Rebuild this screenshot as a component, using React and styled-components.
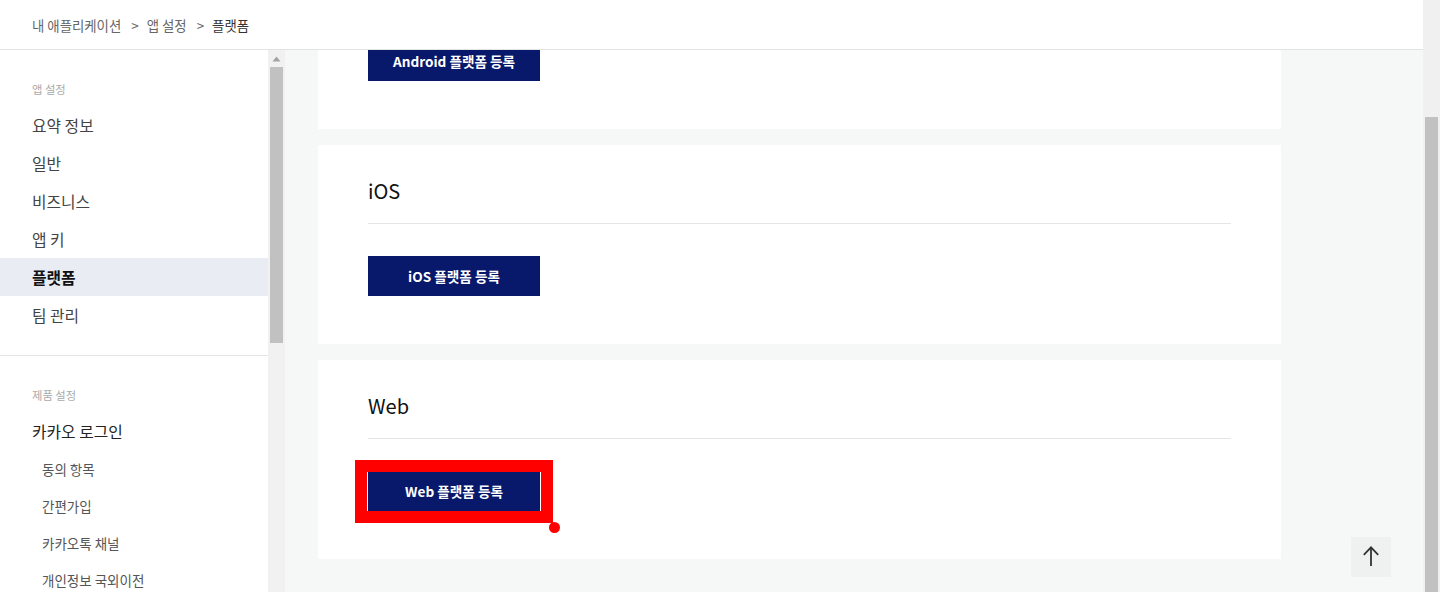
import React, { useLayoutEffect, useRef } from 'react';
import styled, { createGlobalStyle } from 'styled-components';

const GlobalStyle = createGlobalStyle`
  html, body { margin: 0; padding: 0; overflow: hidden; }
  body { font-family: "Noto Sans CJK KR", "Noto Sans", sans-serif; color: #333; }
  * { box-sizing: border-box; }
`;

/* ---------- drawn scrollbars ---------- */
const Track = styled.div`
  flex: 0 0 17px;
  width: 17px;
  display: flex;
  flex-direction: column;
  background: ${p => p.$bg};
`;

const TrackButton = styled.div`
  flex: 0 0 17px;
  display: flex;
  align-items: center;
  justify-content: center;
`;

const Thumb = styled.div`
  margin: 0 2px;
  background: #c1c1c1;
`;

function Scrollbar({ bg, offset, size, withArrow }) {
  return (
    <Track $bg={bg}>
      {withArrow && (
        <TrackButton>
          <svg width="17" height="17" viewBox="0 0 17 17">
            <path d="M4.5 11.5h8l-4-5z" fill="#a3a3a3" />
          </svg>
        </TrackButton>
      )}
      <Thumb style={{ marginTop: offset, height: size }} />
    </Track>
  );
}

/* ---------- page ---------- */
const Frame = styled.div`
  display: flex;
  height: 100vh;
`;

const PageScroller = styled.div`
  flex: 1;
  min-width: 0;
  overflow: hidden;
  background: #f6f7f7;
`;

const Header = styled.header`
  position: sticky;
  top: 0;
  z-index: 2;
  height: 50px;
  background: #fff;
  border-bottom: 1px solid #e3e3e3;
  display: flex;
  align-items: center;
  padding-left: 32px;
`;

const Crumb = styled.span`
  font-size: 13.4px;
  color: ${p => (p.$current ? '#333' : '#666')};
`;

const CrumbSep = styled.span`
  font-size: 13.4px;
  color: #666;
  margin: 0 8px 0 10px;
`;

const BodyRow = styled.div`
  display: flex;
  align-items: flex-start;
`;

const Sidebar = styled.aside`
  position: sticky;
  top: 50px;
  flex: 0 0 285px;
  height: 542px;
  display: flex;
  background: #fff;
`;

const SideList = styled.nav`
  flex: 0 0 268px;
  overflow: hidden;
`;

const Section = styled.div`
  padding: 29px 0 21px;
  border-bottom: ${p => (p.$divider ? '1px solid #e5e5e5' : 'none')};
`;

const SectionLabel = styled.div`
  padding-left: 32px;
  font-size: 11.3px;
  line-height: 20px;
  color: #aaa;
  margin-bottom: 7px;
`;

const MenuItem = styled.div`
  display: flex;
  align-items: center;
  height: ${p => (p.$sub ? '37px' : '38px')};
  padding-left: ${p => (p.$sub ? '42px' : '32px')};
  font-size: ${p => (p.$sub ? '13.5px' : '15.8px')};
  font-weight: ${p => (p.$active ? 700 : 400)};
  color: ${p => (p.$active ? '#111' : p.$strong ? '#222' : p.$sub ? '#555' : '#444')};
  background: ${p => (p.$active ? '#e9ecf3' : 'transparent')};
  white-space: nowrap;
`;

const Main = styled.main`
  flex: 1;
  padding: 30px 0 33px 33px;
  display: flex;
  flex-direction: column;
  gap: 16px;
`;

const Card = styled.section`
  width: 963px;
  background: #fff;
  padding: 30px 50px 48px;
`;

const CardTitle = styled.h2`
  margin: 0;
  font-size: 20px;
  font-weight: 400;
  line-height: 32px;
  color: #111;
  padding-bottom: 16px;
  border-bottom: 1px solid #e5e5e5;
`;

const ButtonWrap = styled.div`
  position: relative;
  width: 172px;
  margin-top: 32px;
`;

const RegisterButton = styled.button`
  display: block;
  width: 172px;
  height: 40px;
  border: none;
  background: #08186a;
  color: #fff;
  font-family: "Noto Sans CJK KR", "Noto Sans", sans-serif;
  font-size: 13.6px;
  font-weight: 700;
  cursor: pointer;
`;

const Highlight = styled.span`
  position: absolute;
  left: -13px;
  top: -11px;
  width: 198px;
  height: 63px;
  border: 12px solid #ff0000;
  pointer-events: none;
`;

const HighlightDot = styled.span`
  position: absolute;
  left: 181px;
  top: 51px;
  width: 11px;
  height: 11px;
  border-radius: 50%;
  background: #ff0000;
`;

const TopButton = styled.button`
  position: fixed;
  right: 49px;
  bottom: 15px;
  width: 40px;
  height: 40px;
  border: none;
  padding: 0;
  background: #eff0f0;
  display: flex;
  align-items: center;
  justify-content: center;
`;

const appSettings = ['요약 정보', '일반', '비즈니스', '앱 키', '플랫폼', '팀 관리'];
const loginSubs = ['동의 항목', '간편가입', '카카오톡 채널', '개인정보 국외이전', '고급', '보안'];
const moreProducts = ['카카오톡 공유', '카카오톡 메시지', '카카오톡 소셜', '카카오톡 채널', '푸시 알림', '카카오페이', '카카오맵'];

const platforms = [
  { name: 'Android' },
  { name: 'iOS' },
  { name: 'Web', highlighted: true },
];

export default function App() {
  const ref = useRef(null);
  useLayoutEffect(() => {
    if (ref.current) ref.current.scrollTop = ref.current.scrollHeight;
  }, []);

  return (
    <>
      <GlobalStyle />
      <Frame>
        <PageScroller ref={ref}>
          <Header>
            <Crumb>내 애플리케이션</Crumb>
            <CrumbSep>&gt;</CrumbSep>
            <Crumb>앱 설정</Crumb>
            <CrumbSep>&gt;</CrumbSep>
            <Crumb $current>플랫폼</Crumb>
          </Header>
          <BodyRow>
            <Sidebar>
              <SideList>
                <Section $divider>
                  <SectionLabel>앱 설정</SectionLabel>
                  {appSettings.map(item => (
                    <MenuItem key={item} $active={item === '플랫폼'}>{item}</MenuItem>
                  ))}
                </Section>
                <Section>
                  <SectionLabel>제품 설정</SectionLabel>
                  <MenuItem $strong>카카오 로그인</MenuItem>
                  {loginSubs.map(item => (
                    <MenuItem key={item} $sub>{item}</MenuItem>
                  ))}
                  {moreProducts.map(item => (
                    <MenuItem key={item}>{item}</MenuItem>
                  ))}
                </Section>
              </SideList>
              <Scrollbar bg="#f1f1f1" offset={0} size={276} withArrow />
            </Sidebar>
            <Main>
              {platforms.map(p => (
                <Card key={p.name}>
                  <CardTitle>{p.name}</CardTitle>
                  <ButtonWrap>
                    <RegisterButton>{p.name} 플랫폼 등록</RegisterButton>
                    {p.highlighted && (
                      <>
                        <Highlight />
                        <HighlightDot />
                      </>
                    )}
                  </ButtonWrap>
                </Card>
              ))}
            </Main>
          </BodyRow>
        </PageScroller>
        <Scrollbar bg="#f0f0f0" offset={117} size={475} />
      </Frame>
      <TopButton aria-label="맨 위로">
        <svg width="40" height="40" viewBox="0 0 40 40" fill="none" stroke="#333" strokeWidth="1.8">
          <path d="M20 10.5V29" />
          <path d="M12.8 17.8L20 10.3l7.2 7.5" />
        </svg>
      </TopButton>
    </>
  );
}
